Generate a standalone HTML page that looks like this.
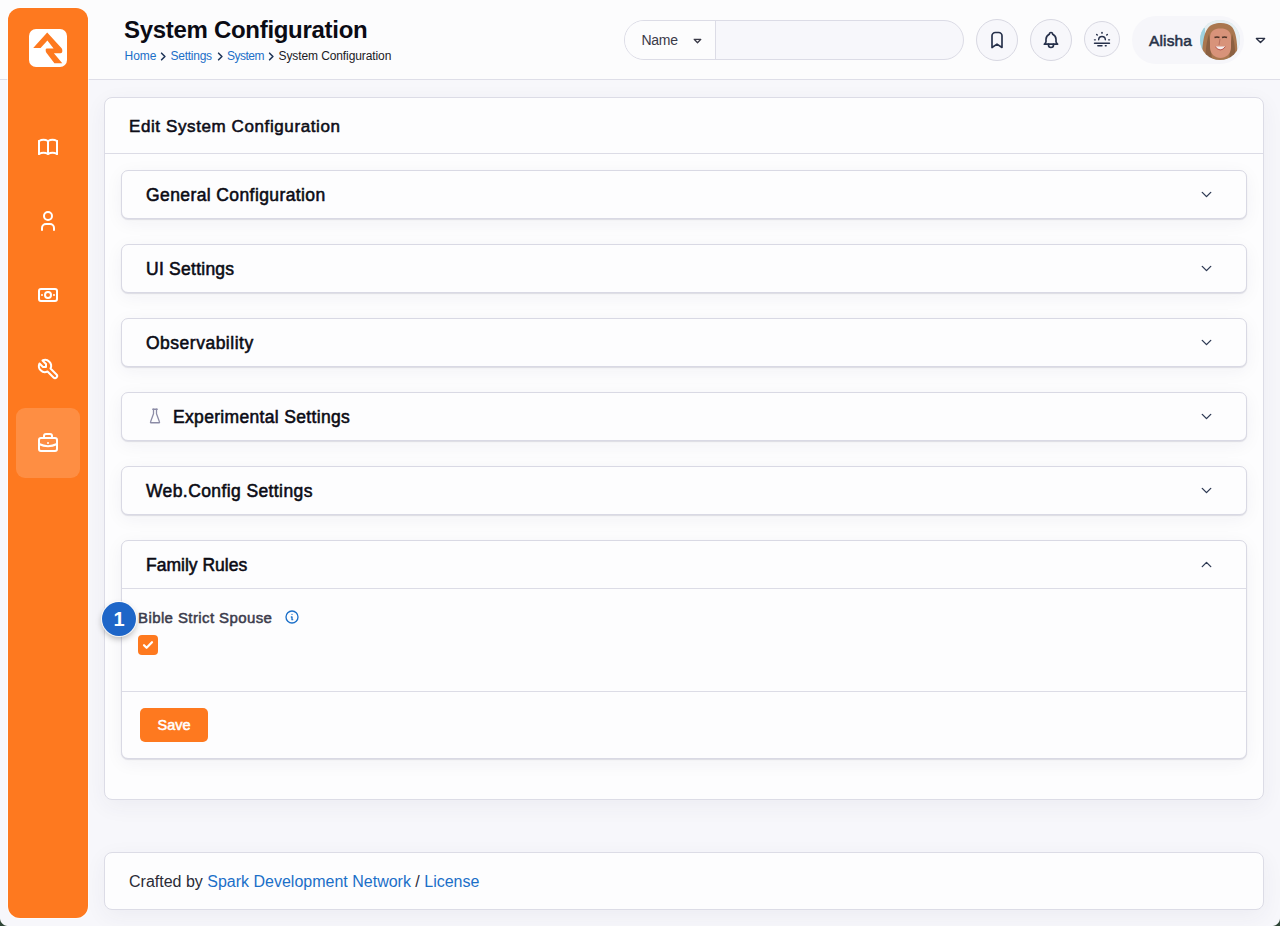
<!DOCTYPE html>
<html><head><meta charset="utf-8">
<style>
*{box-sizing:border-box;margin:0;padding:0}
html,body{width:1280px;height:926px;overflow:hidden}
body{background:#f7f7fb;font-family:"Liberation Sans",sans-serif;position:relative;color:#0f0f1a}
.abs{position:absolute}
#header{position:absolute;left:0;top:0;width:1280px;height:80px;background:#fcfcfd;border-bottom:1px solid #dedee8}
#sidebar{position:absolute;left:8px;top:8px;width:80px;height:910px;background:#fe791f;border-radius:12px;box-shadow:0 0 0 1px rgba(255,255,255,0.6)}
#logo{position:absolute;left:21px;top:21px;width:38px;height:38px;background:#fff;border-radius:7px}
.nav{position:absolute;left:8px;width:64px;height:70px;border-radius:9px}
.nav svg{position:absolute;left:20px;top:23px}
.nav.active{background:rgba(255,255,255,0.16)}
h1{position:absolute;left:124px;top:15.5px;font-size:24px;font-weight:700;letter-spacing:-0.3px;color:#0b0b14;white-space:nowrap}
.crumbs{position:absolute;left:124px;top:49px;font-size:12px;white-space:nowrap;color:#1a1a24}
.crumbs a{color:#1b6fc8;text-decoration:none}
.card{position:absolute;background:#fdfdfe;border:1px solid #dcdce6;border-radius:8px;box-shadow:0 6px 22px rgba(50,50,100,0.055)}
.panel{position:absolute;left:16px;width:1126px;background:#fdfdfe;border:1px solid #d9d9e4;border-radius:7px;box-shadow:0 1px 1px rgba(30,30,70,0.12),0 4px 18px rgba(30,30,70,0.05)}
.panel .t{position:absolute;left:24px;top:14px;font-size:17.5px;font-weight:400;-webkit-text-stroke:0.55px #0b0b14;letter-spacing:0.4px;white-space:nowrap;color:#0b0b14}
.hbtn{border:1px solid #d8d8e2;border-radius:50%;background:#f7f7fb}
.hbtn svg{position:absolute;left:50%;top:50%;transform:translate(-50%,-50%)}
.panel svg.chev{position:absolute;right:31.5px;top:15px}
</style></head>
<body>
<div id="header"></div>
<div id="sidebar">
  <div id="logo">
    <svg width="38" height="38" viewBox="0 0 38 38"><path fill="#fe791f" d="M18.2 3.4 L32.4 18.9 Q33.3 19.9 33.3 21.2 L33.3 22.4 Q33.3 24.2 31.5 24.2 L24.9 24.2 L33.3 34.3 L25.4 34.3 L17.4 23.8 Q16.7 22.9 16.7 21.6 L16.7 20.6 Q16.7 19.4 18 19.4 L24.6 19.4 L18.4 11.4 L11.6 18.9 L4.2 18.9 Z"/></svg>
  </div>
  <div class="nav" style="top:104px"><svg width="24" height="24" viewBox="0 0 24 24" fill="none" stroke="#fff" stroke-width="2" stroke-linecap="round" stroke-linejoin="round"><path d="M3 19a9 9 0 0 1 9 0a9 9 0 0 1 9 0"/><path d="M3 6a9 9 0 0 1 9 0a9 9 0 0 1 9 0"/><path d="M3 6l0 13"/><path d="M12 6l0 13"/><path d="M21 6l0 13"/></svg></div>
  <div class="nav" style="top:178px"><svg width="24" height="24" viewBox="0 0 24 24" fill="none" stroke="#fff" stroke-width="2" stroke-linecap="round" stroke-linejoin="round"><path d="M8 7a4 4 0 1 0 8 0a4 4 0 0 0 -8 0"/><path d="M6 21v-2a4 4 0 0 1 4 -4h4a4 4 0 0 1 4 4v2"/></svg></div>
  <div class="nav" style="top:252px"><svg width="24" height="24" viewBox="0 0 24 24" fill="none" stroke="#fff" stroke-width="2" stroke-linecap="round" stroke-linejoin="round"><path d="M3 8a2 2 0 0 1 2 -2h14a2 2 0 0 1 2 2v8a2 2 0 0 1 -2 2h-14a2 2 0 0 1 -2 -2z"/><path d="M9 12a3 3 0 1 0 6 0a3 3 0 1 0 -6 0"/><path d="M18 12l.01 0"/><path d="M6 12l.01 0"/></svg></div>
  <div class="nav" style="top:326px"><svg width="24" height="24" viewBox="0 0 24 24" fill="none" stroke="#fff" stroke-width="2" stroke-linecap="round" stroke-linejoin="round"><path d="M7 10h3v-3l-3.5 -3.5a6 6 0 0 1 8 8l6 6a2 2 0 0 1 -3 3l-6 -6a6 6 0 0 1 -8 -8l3.5 3.5"/></svg></div>
  <div class="nav active" style="top:400px"><svg width="24" height="24" viewBox="0 0 24 24" fill="none" stroke="#fff" stroke-width="2" stroke-linecap="round" stroke-linejoin="round"><path d="M3 9a2 2 0 0 1 2 -2h14a2 2 0 0 1 2 2v9a2 2 0 0 1 -2 2h-14a2 2 0 0 1 -2 -2z"/><path d="M8 7v-2a2 2 0 0 1 2 -2h4a2 2 0 0 1 2 2v2"/><path d="M12 12l0 .01"/><path d="M3 13a20 20 0 0 0 18 0"/></svg></div>
</div>
<h1>System Configuration</h1>

<div class="abs" style="left:624px;top:20px;width:340px;height:40px;border:1px solid #dcdce6;border-radius:20px;background:#f7f7fb;overflow:hidden">
  <div class="abs" style="left:0;top:0;width:91px;height:38px;background:#fcfcfd;border-right:1px solid #dcdce6"></div>
  <div class="abs" style="left:16.5px;top:10.8px;font-size:14px;letter-spacing:-0.3px;color:#3a3a48">Name</div>
  <svg class="abs" style="left:68px;top:17px" width="9" height="6" viewBox="0 0 9 6"><path d="M1.2 1.3h6.6l-3.3 3.5z" fill="none" stroke="#3a3a48" stroke-width="1.3" stroke-linejoin="round"/></svg>
</div>
<div class="abs hbtn" style="left:976px;top:19px;width:42px;height:42px"><svg width="20" height="20" viewBox="0 0 24 24" fill="none" stroke="#26304a" stroke-width="2" stroke-linecap="round" stroke-linejoin="round"><path d="M18 7v14l-6 -4l-6 4v-14a4 4 0 0 1 4 -4h4a4 4 0 0 1 4 4z"/></svg></div>
<div class="abs hbtn" style="left:1030px;top:19px;width:42px;height:42px"><svg width="20" height="20" viewBox="0 0 24 24" fill="none" stroke="#26304a" stroke-width="2" stroke-linecap="round" stroke-linejoin="round"><path d="M10 5a2 2 0 1 1 4 0a7 7 0 0 1 4 6v3a4 4 0 0 0 2 3h-16a4 4 0 0 0 2 -3v-3a7 7 0 0 1 4 -6"/><path d="M9 17v1a3 3 0 0 0 6 0v-1"/></svg></div>
<div class="abs hbtn" style="left:1084px;top:21px;width:36px;height:36px"><svg width="20" height="20" viewBox="0 0 24 24" fill="none" stroke="#26304a" stroke-width="1.7" stroke-linecap="round" stroke-linejoin="round"><path d="M3 13h1"/><path d="M20 13h1"/><path d="M5.6 6.6l.7 .7"/><path d="M18.4 6.6l-.7 .7"/><path d="M8 13a4 4 0 1 1 8 0"/><path d="M3 17h18"/><path d="M7 20h5"/><path d="M16 20h1"/><path d="M12 5v-1"/></svg></div>
<div class="abs" style="left:1132px;top:16px;width:112px;height:48px;border-radius:24px;background:#f6f6fa"></div>
<div class="abs" style="left:1149px;top:32px;font-size:15.5px;font-weight:400;-webkit-text-stroke:0.55px #283248;letter-spacing:0.15px;color:#283248">Alisha</div>
<div class="abs" style="left:1200px;top:20px;width:40px;height:40px;border-radius:50%;overflow:hidden;background:#cfe3ea">
  <svg width="40" height="40" viewBox="0 0 40 40" style="filter:blur(0.5px)"><rect width="40" height="40" fill="#e6eff2"/><g><rect x="0" y="8" width="5" height="26" fill="#9fd3e0"/><path d="M2 42 C2 28 3 14 8 8 C12 2 27 1 32 7 C37 13 38 28 37 42 Z" fill="#a9774f"/><path d="M6 40 C5 30 7 20 9 14 L12 40Z M35 40 C36 30 34 20 32 14 L29 40Z" fill="#6e4a33" opacity="0.5"/><path d="M10 18 C10 11 14 8.5 20.5 8.5 C27 8.5 31 11 31 18 L31 27 C31 34 26 38 20.5 38 C15 38 10 34 10 27 Z" fill="#d8937a"/><path d="M14.5 17.5 q2.5 -1.2 5 0M22 17.5 q2.5 -1.2 5 0" stroke="#4e3428" stroke-width="1.5" fill="none"/><path d="M20 19 L19 25" stroke="#b87060" stroke-width="1" fill="none"/><path d="M15 26.5 Q20.5 32 25.5 26.5 Z" fill="#f4eeee"/><path d="M15 26.5 Q20.5 33.5 25.5 26.5" stroke="#b85a55" stroke-width="1" fill="none"/></g></svg>
</div>
<svg class="abs" style="left:1255px;top:37px" width="11" height="7" viewBox="0 0 11 7"><path d="M1.4 1.4h8.2l-4.1 4.2z" fill="none" stroke="#2a3044" stroke-width="1.4" stroke-linejoin="round"/></svg>
<div class="crumbs"><a class="abs" style="left:0.5px;top:0">Home</a><a class="abs" style="left:46.5px;top:0;letter-spacing:-0.25px">Settings</a><a class="abs" style="left:103px;top:0;letter-spacing:-0.5px">System</a><span class="abs" style="left:154.5px;top:0;letter-spacing:-0.1px">System Configuration</span></div><svg class="abs" style="left:160px;top:52px" width="7" height="9" viewBox="0 0 7 9"><path d="M1.6 1.2l3.3 3.3l-3.3 3.3" fill="none" stroke="#1f3558" stroke-width="1.6" stroke-linecap="round" stroke-linejoin="round"/></svg><svg class="abs" style="left:216.8px;top:52px" width="7" height="9" viewBox="0 0 7 9"><path d="M1.6 1.2l3.3 3.3l-3.3 3.3" fill="none" stroke="#1f3558" stroke-width="1.6" stroke-linecap="round" stroke-linejoin="round"/></svg><svg class="abs" style="left:268.2px;top:52px" width="7" height="9" viewBox="0 0 7 9"><path d="M1.6 1.2l3.3 3.3l-3.3 3.3" fill="none" stroke="#1f3558" stroke-width="1.6" stroke-linecap="round" stroke-linejoin="round"/></svg>

<div class="card" style="left:104px;top:97px;width:1160px;height:703px">
  <div class="abs" style="left:24px;top:19px;font-size:17px;font-weight:400;-webkit-text-stroke:0.55px #0b0b14;letter-spacing:0.6px;white-space:nowrap">Edit System Configuration</div>
  <div class="abs" style="left:0;top:55px;width:1158px;height:1px;background:#dcdce6"></div>
  <div class="panel" style="top:72px;height:49px"><div class="t">General Configuration</div><svg class="chev" width="17" height="17" viewBox="0 0 24 24" fill="none" stroke="#2e3a54" stroke-width="1.9" stroke-linecap="round" stroke-linejoin="round"><path d="M6 9l6 6l6 -6"/></svg></div>
  <div class="panel" style="top:146px;height:49px"><div class="t" style="letter-spacing:0.25px">UI Settings</div><svg class="chev" width="17" height="17" viewBox="0 0 24 24" fill="none" stroke="#2e3a54" stroke-width="1.9" stroke-linecap="round" stroke-linejoin="round"><path d="M6 9l6 6l6 -6"/></svg></div>
  <div class="panel" style="top:220px;height:49px"><div class="t" style="letter-spacing:0.5px">Observability</div><svg class="chev" width="17" height="17" viewBox="0 0 24 24" fill="none" stroke="#2e3a54" stroke-width="1.9" stroke-linecap="round" stroke-linejoin="round"><path d="M6 9l6 6l6 -6"/></svg></div>
  <div class="panel" style="top:294px;height:49px"><svg class="abs" style="left:24px;top:14px" width="18" height="18" viewBox="0 0 24 24" fill="none" stroke="#8c8ca6" stroke-width="1.7" stroke-linecap="round" stroke-linejoin="round"><path d="M9 3l6 0"/><path d="M10 3v6l-4 11a.7 .7 0 0 0 .5 1h11a.7 .7 0 0 0 .5 -1l-4 -11v-6"/></svg><div class="t" style="left:51px;letter-spacing:0.33px">Experimental Settings</div><svg class="chev" width="17" height="17" viewBox="0 0 24 24" fill="none" stroke="#2e3a54" stroke-width="1.9" stroke-linecap="round" stroke-linejoin="round"><path d="M6 9l6 6l6 -6"/></svg></div>
  <div class="panel" style="top:368px;height:49px"><div class="t">Web.Config Settings</div><svg class="chev" width="17" height="17" viewBox="0 0 24 24" fill="none" stroke="#2e3a54" stroke-width="1.9" stroke-linecap="round" stroke-linejoin="round"><path d="M6 9l6 6l6 -6"/></svg></div>
  <div class="panel" style="top:442px;height:219px"><div class="t" style="letter-spacing:0px">Family Rules</div><svg class="chev" width="17" height="17" viewBox="0 0 24 24" fill="none" stroke="#2e3a54" stroke-width="1.9" stroke-linecap="round" stroke-linejoin="round"><path d="M6 15l6 -6l6 6"/></svg>
    <div class="abs" style="left:0;top:47px;width:1124px;height:1px;background:#dcdce6"></div>
    <div class="abs" style="left:16px;top:68px;font-size:15px;font-weight:400;-webkit-text-stroke:0.5px #3c3c4c;letter-spacing:0.4px;color:#3c3c4c;white-space:nowrap">Bible Strict Spouse</div>
    <svg class="abs" style="left:162px;top:68px" width="16" height="16" viewBox="0 0 24 24" fill="none" stroke="#1b6fc8" stroke-width="2" stroke-linecap="round" stroke-linejoin="round"><path d="M3 12a9 9 0 1 0 18 0a9 9 0 0 0 -18 0"/><path d="M12 8h.01"/><path d="M11 12h1v4h1"/></svg>
    <div class="abs" style="left:16px;top:94px;width:20px;height:20px;border-radius:4px;background:#fe791f"><svg class="abs" style="left:4px;top:5px" width="12" height="10" viewBox="0 0 12 10"><path d="M2 5.2l2.6 2.6l5.4 -5.6" fill="none" stroke="#fff" stroke-width="2.2" stroke-linecap="round" stroke-linejoin="round"/></svg></div>
    <div class="abs" style="left:0;top:150px;width:1124px;height:1px;background:#dcdce6"></div>
    <div class="abs" style="left:18px;top:167px;width:68px;height:34px;border-radius:5px;background:#fe791f;color:#fff;font-size:14.5px;font-weight:400;-webkit-text-stroke:0.55px #fff;text-align:center;line-height:34px">Save</div>
  </div>
</div>

<div class="card" style="left:104px;top:852px;width:1160px;height:58px">
  <div class="abs" style="left:24px;top:20px;font-size:16px;white-space:nowrap;color:#2b2b36">Crafted by <span style="color:#1b6fc8">Spark Development Network</span> / <span style="color:#1b6fc8">License</span></div>
</div>
<div class="abs" style="left:102px;top:602px;width:34px;height:34px;border-radius:50%;background:#1e66c8;box-shadow:0 0 0 1px rgba(255,255,255,0.8),0 3px 6px rgba(0,0,0,0.28);color:#fff;font-size:20px;font-weight:700;text-align:center;line-height:34px">1</div>
<div class="abs" style="left:0;top:918px;width:8px;height:8px;background:radial-gradient(circle at 100% 0,rgba(0,0,0,0) 7.5px,#2f4636 8.5px)"></div>
<div class="abs" style="left:1272px;top:918px;width:8px;height:8px;background:radial-gradient(circle at 0 0,rgba(0,0,0,0) 7.5px,#2f4636 8.5px)"></div>
</body></html>
